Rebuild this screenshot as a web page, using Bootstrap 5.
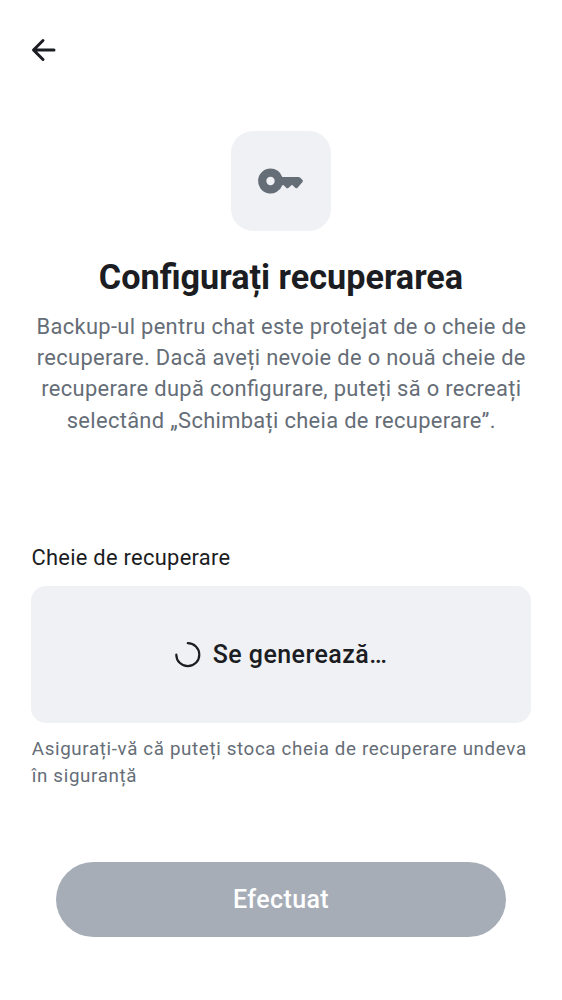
<!DOCTYPE html>
<html lang="ro">
<head>
<meta charset="utf-8">
<meta name="viewport" content="width=device-width, initial-scale=1">
<title>Configurați recuperarea</title>
<link href="https://cdn.jsdelivr.net/npm/bootstrap@5.3.0/dist/css/bootstrap.min.css" rel="stylesheet">
<style>
body{font-family:Roboto,sans-serif;color:#1b1d22;background:#fff;width:562px;height:1000px;overflow:hidden}
.screen{height:1000px}
.topbar{height:100px;padding-left:31px}
.tile{width:100px;height:100px;border-radius:22px;background:#f0f1f5;margin-top:31px}
.headline{font-size:34.2px;line-height:44px;font-weight:700;margin-top:24px;white-space:nowrap}
.intro{font-size:21.88px;line-height:31.2px;letter-spacing:.33px;font-feature-settings:"liga" 1;color:#656d77;margin-top:12px;padding-left:.6px;white-space:nowrap}
.field{margin:105.2px 31px 0}
.field-label{font-size:21.88px;line-height:34px;letter-spacing:.29px;padding-left:.4px}
.keybox{height:137px;border-radius:15px;background:#f0f1f5;margin-top:11px;gap:12px;font-size:25px;font-weight:500;letter-spacing:.44px}
.hint{font-size:18.75px;line-height:27px;letter-spacing:.64px;color:#656d77;margin-top:12.6px;padding-left:.8px;white-space:nowrap}
.done,.done:disabled{margin:72.5px 56px 0;padding:1px 0 0;height:75px;background:#a6adb7;color:#fff;font-size:25px;font-weight:500;letter-spacing:.4px;border:0;opacity:1}
</style>
</head>
<body>
<main class="screen d-flex flex-column">
<header class="topbar d-flex align-items-center">
<svg width="26" height="26" viewBox="0 0 26 26" fill="none" stroke="#1b1d22" stroke-width="3" stroke-linecap="round" stroke-linejoin="round"><path d="M23 13H3M12 3.5 2.5 13 12 22.5"/></svg>
</header>
<div class="tile mx-auto d-flex align-items-center justify-content-center">
<svg width="50" height="50" viewBox="0 0 50 50" fill="#656d77"><path fill-rule="evenodd" d="M14.5 12.5A12.5 12.5 0 0 1 26.3 21H42.3Q43.5 21 44.3 21.8L46.5 24Q47.4 25 46.5 26.1L41.3 31.9Q40.4 32.7 39.5 31.9L36 28.7 32.3 31.9Q31.3 32.6 30.4 31.9L27.8 29.2H26.3A12.5 12.5 0 1 1 14.5 12.5Zm0 8.3a4.2 4.2 0 1 0 0 8.4 4.2 4.2 0 0 0 0-8.4Z"/></svg>
</div>
<h1 class="headline text-center mb-0">Configurați recuperarea</h1>
<p class="intro text-center mb-0">Backup-ul pentru chat este protejat de o cheie de<br>recuperare. Dacă aveți nevoie de o nouă cheie de<br>recuperare după configurare, puteți să o recreați<br>selectând „Schimbați cheia de recuperare”.</p>
<section class="field">
<div class="field-label">Cheie de recuperare</div>
<div class="keybox d-flex align-items-center justify-content-center">
<svg width="26" height="26" viewBox="0 0 26 26" fill="none" stroke="#1b1d22" stroke-width="2.2" stroke-linecap="round"><path d="M12.8 1.2A11.5 11.5 0 1 1 1.3 12.7"/></svg>
<span>Se generează…</span>
</div>
<div class="hint">Asigurați-vă că puteți stoca cheia de recuperare undeva<br>în siguranță</div>
</section>
<button class="done btn rounded-pill" disabled>Efectuat</button>
</main>
<script src="https://cdn.jsdelivr.net/npm/bootstrap@5.3.0/dist/js/bootstrap.bundle.min.js"></script>
</body>
</html>
